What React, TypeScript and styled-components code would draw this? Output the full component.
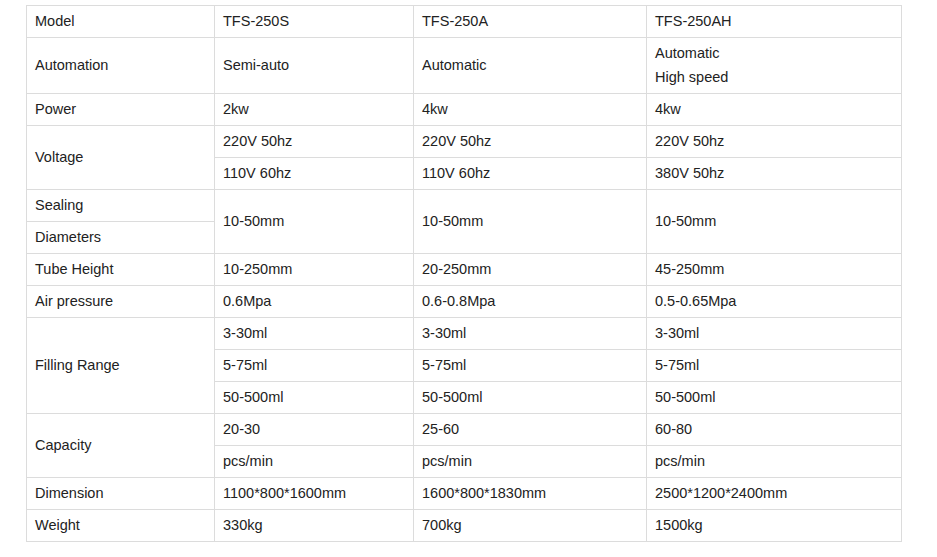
import styled, { createGlobalStyle } from 'styled-components';

const GlobalStyle = createGlobalStyle`
  html, body {
    margin: 0;
    padding: 0;
    background: #fff;
  }
  body {
    font-family: 'Liberation Sans', Arial, sans-serif;
    color: #222;
  }
`;

const Wrapper = styled.div`
  padding: 5px 0 0 26px;
`;

const SpecTable = styled.table`
  border-collapse: collapse;
  table-layout: fixed;
  width: 875px;
  font-size: 14.5px;
  line-height: 23px;
  color: #222;
`;

const Col = styled.col<{ $w: number }>`
  width: ${(p) => p.$w}px;
`;

const Cell = styled.td`
  border: 1px solid #dcdcdc;
  padding: 4px 8px;
  vertical-align: middle;
  text-align: left;
  white-space: nowrap;
`;

const Line = styled.div`
  & + & {
    margin-top: 1px;
  }
`;

type Row = {
  label?: string;
  labelSpan?: number;
  cells: { text: string[]; span?: number }[];
};

const colWidths = [188, 199, 233, 255];

const rows: Row[] = [
  { label: 'Model', cells: [{ text: ['TFS-250S'] }, { text: ['TFS-250A'] }, { text: ['TFS-250AH'] }] },
  {
    label: 'Automation',
    cells: [{ text: ['Semi-auto'] }, { text: ['Automatic'] }, { text: ['Automatic', 'High speed'] }],
  },
  { label: 'Power', cells: [{ text: ['2kw'] }, { text: ['4kw'] }, { text: ['4kw'] }] },
  {
    label: 'Voltage',
    labelSpan: 2,
    cells: [{ text: ['220V 50hz'] }, { text: ['220V 50hz'] }, { text: ['220V 50hz'] }],
  },
  { cells: [{ text: ['110V 60hz'] }, { text: ['110V 60hz'] }, { text: ['380V 50hz'] }] },
  {
    label: 'Sealing',
    cells: [
      { text: ['10-50mm'], span: 2 },
      { text: ['10-50mm'], span: 2 },
      { text: ['10-50mm'], span: 2 },
    ],
  },
  { label: 'Diameters', cells: [] },
  { label: 'Tube Height', cells: [{ text: ['10-250mm'] }, { text: ['20-250mm'] }, { text: ['45-250mm'] }] },
  { label: 'Air pressure', cells: [{ text: ['0.6Mpa'] }, { text: ['0.6-0.8Mpa'] }, { text: ['0.5-0.65Mpa'] }] },
  {
    label: 'Filling Range',
    labelSpan: 3,
    cells: [{ text: ['3-30ml'] }, { text: ['3-30ml'] }, { text: ['3-30ml'] }],
  },
  { cells: [{ text: ['5-75ml'] }, { text: ['5-75ml'] }, { text: ['5-75ml'] }] },
  { cells: [{ text: ['50-500ml'] }, { text: ['50-500ml'] }, { text: ['50-500ml'] }] },
  {
    label: 'Capacity',
    labelSpan: 2,
    cells: [{ text: ['20-30'] }, { text: ['25-60'] }, { text: ['60-80'] }],
  },
  { cells: [{ text: ['pcs/min'] }, { text: ['pcs/min'] }, { text: ['pcs/min'] }] },
  {
    label: 'Dimension',
    cells: [{ text: ['1100*800*1600mm'] }, { text: ['1600*800*1830mm'] }, { text: ['2500*1200*2400mm'] }],
  },
  { label: 'Weight', cells: [{ text: ['330kg'] }, { text: ['700kg'] }, { text: ['1500kg'] }] },
];

const App = () => (
  <Wrapper>
    <GlobalStyle />
    <SpecTable>
      <colgroup>
        {colWidths.map((w) => (
          <Col key={w} $w={w} />
        ))}
      </colgroup>
      <tbody>
        {rows.map((row, i) => (
          <tr key={i}>
            {row.label && <Cell rowSpan={row.labelSpan}>{row.label}</Cell>}
            {row.cells.map((c, j) => (
              <Cell key={j} rowSpan={c.span}>
                {c.text.map((t) => (
                  <Line key={t}>{t}</Line>
                ))}
              </Cell>
            ))}
          </tr>
        ))}
      </tbody>
    </SpecTable>
  </Wrapper>
);

export default App;
